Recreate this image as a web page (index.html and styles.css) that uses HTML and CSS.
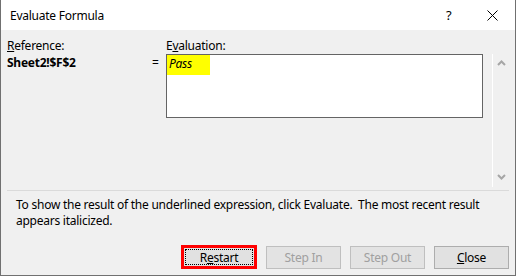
FILE: index.html
```html
<!DOCTYPE html>
<html lang="en">
<head>
    <meta charset="UTF-8">
    <title>Evaluate Formula</title>
    <link rel="stylesheet" href="styles.css">
</head>
<body>

    <div class="dialog">
        <div class="titlebar">
            <span class="title">Evaluate Formula</span>
            <span class="help">?</span>
            <span class="closeX">
                <svg width="11" height="11" viewBox="0 0 11 11">
                    <path d="M0.5 0.5 L10.5 10.5 M10.5 0.5 L0.5 10.5" stroke="#000" stroke-width="1"/>
                </svg>
            </span>
        </div>

        <div class="corpo">
            <div class="grade">
                <div class="rotulo"><u>R</u>eference:</div>
                <div></div>
                <div class="rotulo">E<u>v</u>aluation:</div>
                <div></div>

                <div class="ref">Sheet2!$F$2</div>
                <div class="igual">=</div>
                <div class="caixa"><span class="resultado">Pass</span></div>
                <div class="rolagem">
                    <svg width="9" height="6" viewBox="0 0 9 6"><path d="M1 5 L4.5 1.5 L8 5" stroke="#a6a6a6" stroke-width="2" fill="none"/></svg>
                    <svg width="9" height="6" viewBox="0 0 9 6"><path d="M1 1 L4.5 4.5 L8 1" stroke="#a6a6a6" stroke-width="2" fill="none"/></svg>
                </div>
            </div>

            <div class="linha"></div>

            <p class="dica">To show the result of the underlined expression, click Evaluate.&nbsp; The most recent result<br>appears italicized.</p>

            <div class="botoes">
                <button class="botao foco">R<u>e</u>start</button>
                <button class="botao" disabled>Step In</button>
                <button class="botao" disabled>Step Out</button>
                <button class="botao"><u>C</u>lose</button>
            </div>
        </div>
    </div>

</body>
</html>
```

FILE: styles.css
```css
@charset "utf-8";

*{
    padding: 0px;
    margin: 0px;
    box-sizing: border-box;
}
body{
    background-color: #f0f0f0;
    font: normal 12px "Noto Sans", "Open Sans", sans-serif;
    letter-spacing: -0.25px;
    color: black;
    overflow: hidden;
}
.dialog{
    width: 516px;
    height: 276px;
    border-left: 1px solid #707070;
    border-right: 1px solid #707070;
    border-bottom: 1px solid #707070;
    display: flex;
    flex-direction: column;
}
.titlebar{
    height: 30px;
    background-color: white;
    display: flex;
    align-items: center;
    padding-left: 9px;
    font-size: 12px;
}
.title{
    flex: 1;
}
.help{
    width: 12px;
    margin-right: 29px;
    font-size: 13px;
}
.closeX{
    display: flex;
    margin-right: 17px;
}
.corpo{
    flex: 1;
    background-color: #f0f0f0;
}
.grade{
    display: grid;
    grid-template-columns: 145px 14px 317px 26px;
    grid-template-rows: 24px 133px;
    padding-left: 6px;
}
.rotulo{
    align-self: end;
    line-height: 16px;
}
.ref{
    font-weight: bold;
    line-height: 16px;
    padding-top: 1px;
}
.igual{
    line-height: 16px;
    padding-top: 1px;
}
.caixa{
    height: 64px;
    background-color: white;
    border: 1px solid #646464;
}
.resultado{
    display: inline-block;
    background-color: #ffff00;
    font-style: italic;
    height: 20px;
    width: 43px;
    padding: 1px 0 0 2px;
    line-height: 16px;
}
.rolagem{
    margin-left: 9px;
    border-left: 1px solid white;
    display: flex;
    flex-direction: column;
    justify-content: space-between;
    align-items: center;
    padding: 6px 0 7px 0;
}
.linha{
    height: 1px;
    margin: 3px 6px 0 6px;
    background-color: #dadada;
}
.dica{
    padding: 6px 0 0 15px;
    line-height: 16px;
}
.botoes{
    display: flex;
    justify-content: flex-end;
    align-items: center;
    gap: 9px;
    padding-right: 6px;
    margin-top: 16px;
}
.botao{
    width: 75px;
    height: 23px;
    font: normal 12px "Noto Sans", "Open Sans", sans-serif;
    letter-spacing: -0.25px;
    background-color: #e1e1e1;
    border: 1px solid #adadad;
    color: black;
}
.botao:disabled{
    color: #a0a0a0;
    border-color: #bfbfbf;
    background-color: #e3e3e3;
}
.foco{
    width: 76px;
    height: 24px;
    border: 3px solid #ff0000;
    outline: 1px dotted black;
    outline-offset: -5px;
}
```
